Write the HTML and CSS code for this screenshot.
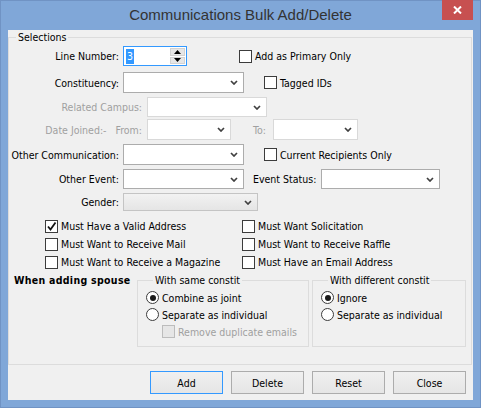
FILE: index.html
```html
<!DOCTYPE html>
<html>
<head>
<meta charset="utf-8">
<link rel="stylesheet" href="styles.css">
</head>
<body>
<div class="window">
  <div class="titlebar">
    <span></span>
    <div class="title">Communications Bulk Add/Delete</div>
    <div class="close"><svg width="9" height="8" viewBox="0 0 9 8"><path d="M1 0.5 L8 7.5 M8 0.5 L1 7.5" stroke="#fff" stroke-width="2" fill="none"/></svg></div>
  </div>
  <div class="client">
    <fieldset class="sel">
      <legend>Selections</legend>

      <div class="row r1">
        <div class="lbl w110">Line Number:</div>
        <div class="spin">
          <div class="val"><span class="hl">3</span></div>
          <div class="spin-btns">
            <div class="sb"><svg width="7" height="4" viewBox="0 0 7 4"><path d="M0 4 L3.5 0 L7 4 Z" fill="#000"/></svg></div>
            <div class="sb"><svg width="7" height="4" viewBox="0 0 7 4"><path d="M0 0 L3.5 4 L7 0 Z" fill="#000"/></svg></div>
          </div>
        </div>
        <label class="ci ml52"><span class="cb"></span><span class="ct">Add as Primary Only</span></label>
      </div>

      <div class="row r2">
        <div class="lbl w110">Constituency:</div>
        <div class="combo w121 h21"><svg class="chev" width="8" height="5" viewBox="0 0 8 5"><path d="M1 1 L4 4 L7 1" stroke="#404040" stroke-width="1.7" fill="none"/></svg></div>
        <label class="ci ml20"><span class="cb"></span><span class="ct">Tagged IDs</span></label>
      </div>

      <div class="row r3">
        <div class="lbl w133 dis">Related Campus:</div>
        <div class="combo dcombo w120 h20 ml5"><svg class="chev" width="8" height="5" viewBox="0 0 8 5"><path d="M1 1 L4 4 L7 1" stroke="#404040" stroke-width="1.7" fill="none"/></svg></div>
      </div>

      <div class="row r4">
        <div class="lbl w133 dis">Date Joined:-&nbsp;&nbsp; From:</div>
        <div class="combo dcombo w84 h21 ml5"><svg class="chev" width="8" height="5" viewBox="0 0 8 5"><path d="M1 1 L4 4 L7 1" stroke="#404040" stroke-width="1.7" fill="none"/></svg></div>
        <div class="tolbl dis">To:</div>
        <div class="combo dcombo w85 h21"><svg class="chev" width="8" height="5" viewBox="0 0 8 5"><path d="M1 1 L4 4 L7 1" stroke="#404040" stroke-width="1.7" fill="none"/></svg></div>
      </div>

      <div class="row r5">
        <div class="lbl w110">Other Communication:</div>
        <div class="combo w121 h21"><svg class="chev" width="8" height="5" viewBox="0 0 8 5"><path d="M1 1 L4 4 L7 1" stroke="#404040" stroke-width="1.7" fill="none"/></svg></div>
        <label class="ci ml20"><span class="cb"></span><span class="ct">Current Recipients Only</span></label>
      </div>

      <div class="row r6">
        <div class="lbl w110">Other Event:</div>
        <div class="combo w121 h20"><svg class="chev" width="8" height="5" viewBox="0 0 8 5"><path d="M1 1 L4 4 L7 1" stroke="#404040" stroke-width="1.7" fill="none"/></svg></div>
        <div class="eslbl">Event Status:</div>
        <div class="combo w119 h20"><svg class="chev" width="8" height="5" viewBox="0 0 8 5"><path d="M1 1 L4 4 L7 1" stroke="#404040" stroke-width="1.7" fill="none"/></svg></div>
      </div>

      <div class="row r7">
        <div class="lbl w110">Gender:</div>
        <div class="combo gcombo w135 h18"><svg class="chev" width="8" height="5" viewBox="0 0 8 5"><path d="M1 1 L4 4 L7 1" stroke="#404040" stroke-width="1.7" fill="none"/></svg></div>
      </div>

      <div class="checks">
        <label class="ci"><span class="cb"><svg width="11" height="11" viewBox="0 0 11 11"><path d="M2 5.5 L4.5 8.5 L9.5 1.5" stroke="#111" stroke-width="1.8" fill="none"/></svg></span><span class="ct">Must Have a Valid Address</span></label>
        <label class="ci"><span class="cb"></span><span class="ct">Must Want Solicitation</span></label>
        <label class="ci"><span class="cb"></span><span class="ct">Must Want to Receive Mail</span></label>
        <label class="ci"><span class="cb"></span><span class="ct">Must Want to Receive Raffle</span></label>
        <label class="ci"><span class="cb"></span><span class="ct">Must Want to Receive a Magazine</span></label>
        <label class="ci"><span class="cb"></span><span class="ct">Must Have an Email Address</span></label>
      </div>

      <div class="spouse">
        <div class="sp-lbl">When adding spouse</div>
        <fieldset class="grp g1">
          <legend>With same constit</legend>
          <div class="rr"><span class="rb on"></span><span class="ct">Combine as joint</span></div>
          <div class="rr"><span class="rb"></span><span class="ct">Separate as individual</span></div>
          <div class="rr ind"><span class="cb dcb"></span><span class="ct dis">Remove duplicate emails</span></div>
        </fieldset>
        <fieldset class="grp g2">
          <legend>With different constit</legend>
          <div class="rr"><span class="rb on"></span><span class="ct">Ignore</span></div>
          <div class="rr"><span class="rb"></span><span class="ct">Separate as individual</span></div>
        </fieldset>
      </div>
    </fieldset>

    <div class="buttons">
      <div class="btn def">Add</div>
      <div class="btn">Delete</div>
      <div class="btn">Reset</div>
      <div class="btn">Close</div>
    </div>
  </div>
</div>
</body>
</html>
```
FILE: styles.css
```css
* { box-sizing: border-box; }
html, body { margin: 0; padding: 0; }
body {
  width: 481px;
  height: 408px;
  overflow: hidden;
  font-family: "DejaVu Sans Condensed", "DejaVu Sans", sans-serif;
  font-stretch: condensed;
  font-size: 10.5px;
  color: #000;
}
.window {
  width: 481px;
  height: 408px;
  background: #80a7d8;
  box-shadow: inset 0 0 0 1px #7093c4;
  display: flex;
  flex-direction: column;
  padding: 0 8px 8px;
}
.titlebar {
  height: 30px;
  flex: none;
  display: grid;
  grid-template-columns: 1fr auto 1fr;
  align-items: start;
}
.title {
  font-family: "Liberation Sans", Arial, sans-serif;
  font-stretch: normal;
  font-size: 15px;
  color: #333;
  line-height: 30px;
  white-space: nowrap;
}
.close {
  justify-self: end;
  width: 31px;
  height: 20px;
  background: #c75050;
  display: flex;
  align-items: center;
  justify-content: center;
}
.client {
  flex: 1;
  background: #f0f0f0;
  display: flex;
  flex-direction: column;
  padding-top: 1px;
}
fieldset {
  margin: 0;
  padding: 0;
  border: 1px solid #dcdcdc;
  min-width: 0;
}
legend {
  padding: 0 2px;
  margin-left: 7px;
  line-height: 13px;
  white-space: nowrap;
}
.sel {
  width: 464px;
  height: 334px;
  flex: none;
}
.row {
  display: flex;
  align-items: center;
  white-space: nowrap;
}
.r1 { margin-top: 2px; height: 20px; }
.r2 { margin-top: 6px; height: 21px; }
.r3 { margin-top: 4px; height: 20px; }
.r4 { margin-top: 2px; height: 21px; }
.r5 { margin-top: 4px; height: 21px; }
.r6 { margin-top: 4px; height: 20px; }
.r7 { margin-top: 4px; height: 18px; }

.lbl { flex: none; text-align: right; }
.w110 { width: 110px; margin-right: 4px; }
.w133 { width: 133px; }
.dis { color: #a0a0a0; }
.ml5 { margin-left: 5px; }
.ml20 { margin-left: 20px; }
.ml52 { margin-left: 52px; }

.spin {
  width: 64px;
  height: 20px;
  border: 1px solid #3399ff;
  background: #fff;
  display: flex;
  padding: 1px;
}
.val { flex: 1; display: flex; align-items: center; padding-left: 1px; }
.hl { background: #3399ff; color: #fff; line-height: 15px; padding: 0 1px; }
.spin-btns {
  width: 15px;
  display: flex;
  flex-direction: column;
  gap: 1px;
}
.sb {
  flex: 1;
  background: #e6e6e6;
  border: 1px solid #d2d2d2;
  display: flex;
  align-items: center;
  justify-content: center;
}

.combo {
  flex: none;
  background: #fff;
  border: 1px solid #acacac;
  display: flex;
  align-items: center;
  justify-content: flex-end;
  padding-right: 5px;
}
.dcombo { border-color: #d9d9d9; }
.gcombo {
  background: linear-gradient(#f2f2f2, #e5e5e5);
  border-color: #c4c4c4;
}
.w121 { width: 121px; }
.w120 { width: 120px; }
.w119 { width: 119px; }
.w84 { width: 84px; }
.w85 { width: 85px; }
.w135 { width: 135px; }
.h18 { height: 18px; }
.h20 { height: 20px; }
.h21 { height: 21px; }

.tolbl { width: 20px; margin-left: 22px; flex: none; }
.eslbl { width: 68px; margin-left: 9px; flex: none; }

.ci {
  display: flex;
  align-items: center;
  white-space: nowrap;
}
.cb {
  flex: none;
  width: 13px;
  height: 13px;
  border: 1px solid #3c3c3c;
  background: #fff;
  display: flex;
  align-items: center;
  justify-content: center;
}
.dcb { background: #e6e6e6; border-color: #bcbcbc; }
.ct { margin-left: 3px; }

.checks {
  margin-top: 6px;
  display: grid;
  grid-template-columns: 197px auto;
  grid-auto-rows: 18px;
  padding-left: 36px;
}

.spouse {
  margin-top: 3px;
  display: flex;
  align-items: flex-start;
}
.sp-lbl {
  width: 128px;
  flex: none;
  padding-left: 5px;
  font-weight: bold;
  letter-spacing: 0.3px;
  line-height: 13px;
  white-space: nowrap;
}
.grp {
  height: 73px;
  padding: 2px 0 0 8px;
}
.g1 { width: 172px; }
.g2 { width: 154px; margin-left: 3px; }
.rr {
  height: 17px;
  display: flex;
  align-items: center;
  white-space: nowrap;
}
.ind { padding-left: 16px; }
.rb {
  flex: none;
  width: 13px;
  height: 13px;
  border: 1px solid #3c3c3c;
  border-radius: 50%;
  background: #fff;
  display: flex;
  align-items: center;
  justify-content: center;
}
.rb.on::after {
  content: "";
  width: 6px;
  height: 6px;
  border-radius: 50%;
  background: #1a1a1a;
}

.buttons {
  margin-top: 6px;
  display: flex;
  justify-content: flex-end;
  gap: 8px;
  padding-right: 7px;
}
.btn {
  width: 73px;
  height: 23px;
  border: 1px solid #acacac;
  background: linear-gradient(#f0f0f0, #e5e5e5);
  display: flex;
  align-items: center;
  justify-content: center;
}
.btn.def { border-color: #3399ff; }
```
